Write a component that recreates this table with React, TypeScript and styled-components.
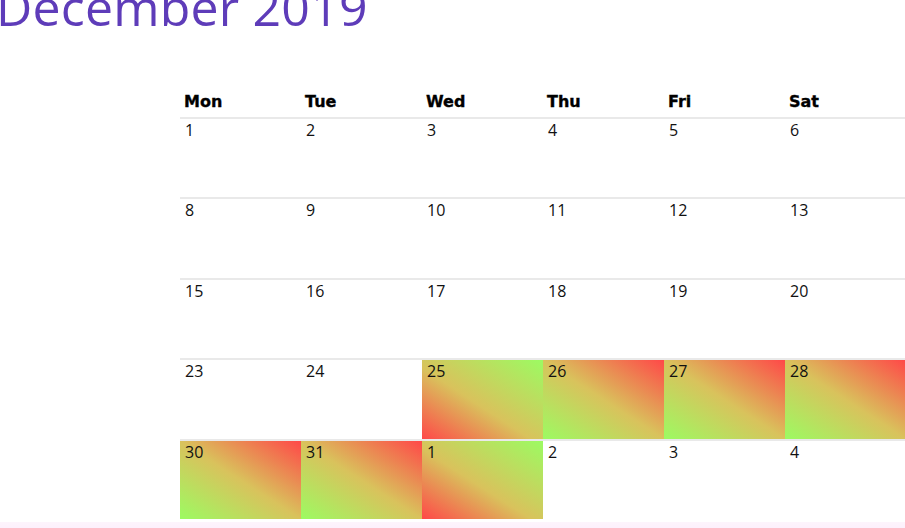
import React from "react"
import styled, { createGlobalStyle } from "styled-components"

const GlobalStyle = createGlobalStyle`
  html, body {
    margin: 0;
    padding: 0;
    background: #ffffff;
    overflow: hidden;
  }
  body {
    font-family: "Open Sans", "Noto Sans", sans-serif;
    color: #111;
  }
`

const Page = styled.div`
  width: 905px;
  height: 528px;
  overflow: hidden;
  display: flex;
  flex-direction: column;
`

const Title = styled.h1`
  margin: -18px 0 0 -4px;
  font-family: "Open Sans", "Noto Sans", sans-serif;
  font-weight: 400;
  font-size: 50px;
  line-height: 50px;
  letter-spacing: 0.2px;
  color: #5e3cb9;
  white-space: nowrap;
`

const Calendar = styled.div`
  margin: 56px 0 0 180px;
  display: grid;
  grid-template-columns: repeat(7, 121px);
  grid-template-rows: 29px repeat(5, 80.4px);
  width: 847px;
`

const DayName = styled.div`
  padding: 4px 4px 0;
  box-sizing: border-box;
  line-height: 20px;
  font-family: "DejaVu Sans", sans-serif;
  font-weight: 700;
  font-size: 16px;
  -webkit-text-stroke: 0.35px #000;
  color: #000;
`

type Shade = "none" | "up" | "down"

const Cell = styled.div<{ $shade: Shade }>`
  box-sizing: border-box;
  padding: 1px 5px 0;
  border-top: 2px solid #e9e9e9;
  font-family: "Open Sans", "Noto Sans", sans-serif;
  font-size: 16px;
  line-height: 20px;
  color: #111;
  background: ${p =>
    p.$shade === "up"
      ? "linear-gradient(to top right, #ff4848, #d9c25c 45%, #9cfb62 100%)"
      : p.$shade === "down"
      ? "linear-gradient(to bottom left, #ff4848, #d9c25c 50%, #9cfb62 100%)"
      : "transparent"};
  background-clip: padding-box;
`

const Footer = styled.div`
  margin-top: 3px;
  height: 10px;
  background: linear-gradient(to bottom, #fdf4fc, #fdf0fc);
`

const days = ["Mon", "Tue", "Wed", "Thu", "Fri", "Sat", "Sun"]

const weeks: number[][] = [
  [1, 2, 3, 4, 5, 6, 7],
  [8, 9, 10, 11, 12, 13, 14],
  [15, 16, 17, 18, 19, 20, 21],
  [23, 24, 25, 26, 27, 28, 29],
  [30, 31, 1, 2, 3, 4, 5]
]

// which cells get a colour wash: up = red at the bottom left, down = red at the top right
const shades: Shade[][] = [
  ["none", "none", "none", "none", "none", "none", "none"],
  ["none", "none", "none", "none", "none", "none", "none"],
  ["none", "none", "none", "none", "none", "none", "none"],
  ["none", "none", "up", "down", "down", "down", "down"],
  ["down", "down", "up", "none", "none", "none", "none"]
]

export default function App() {
  return (
    <Page>
      <GlobalStyle />
      <Title>December 2019</Title>
      <Calendar>
        {days.map(d => (
          <DayName key={d}>{d}</DayName>
        ))}
        {weeks.map((week, w) =>
          week.map((n, i) => (
            <Cell key={`${w}-${i}`} $shade={shades[w][i]}>
              {n}
            </Cell>
          ))
        )}
      </Calendar>
      <Footer />
    </Page>
  )
}
